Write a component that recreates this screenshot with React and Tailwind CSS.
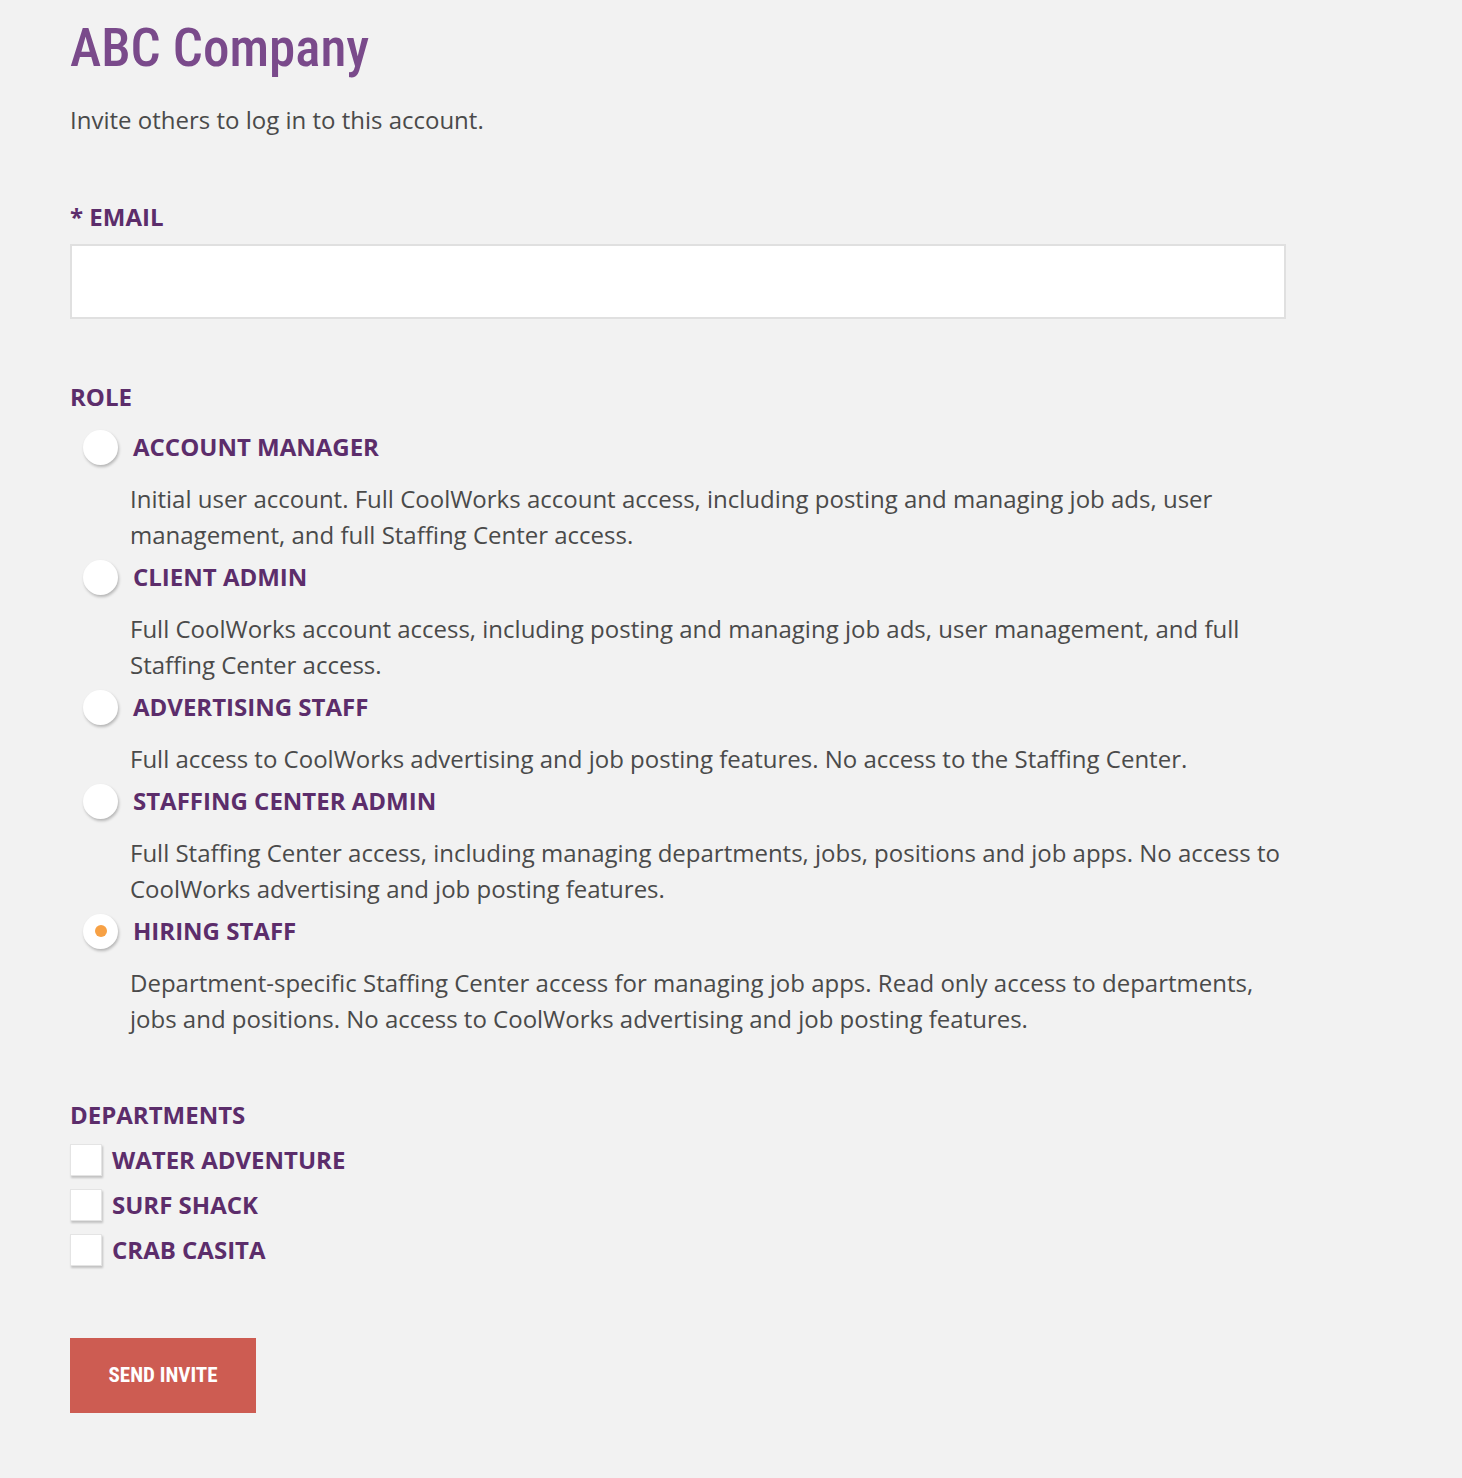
import { useState } from 'react'

const ROLES = [
  {
    id: 'account-manager',
    label: 'Account Manager',
    desc: 'Initial user account. Full CoolWorks account access, including posting and managing job ads, user management, and full Staffing Center access.',
  },
  {
    id: 'client-admin',
    label: 'Client Admin',
    desc: 'Full CoolWorks account access, including posting and managing job ads, user management, and full Staffing Center access.',
  },
  {
    id: 'advertising-staff',
    label: 'Advertising Staff',
    desc: 'Full access to CoolWorks advertising and job posting features. No access to the Staffing Center.',
  },
  {
    id: 'staffing-center-admin',
    label: 'Staffing Center Admin',
    desc: 'Full Staffing Center access, including managing departments, jobs, positions and job apps. No access to CoolWorks advertising and job posting features.',
  },
  {
    id: 'hiring-staff',
    label: 'Hiring Staff',
    desc: 'Department-specific Staffing Center access for managing job apps. Read only access to departments, jobs and positions. No access to CoolWorks advertising and job posting features.',
  },
]

const DEPARTMENTS = ['Water Adventure', 'Surf Shack', 'Crab Casita']

export default function App() {
  const [role, setRole] = useState('hiring-staff')
  const [depts, setDepts] = useState({})
  const [email, setEmail] = useState('')

  return (
    <div className="min-h-[1478px] bg-[#f2f2f2] font-['Open_Sans',sans-serif] text-[#4a4a4a]">
      <div className="w-[1216px] ml-[70px] pt-[18px] pb-[65px]">
        {/* Header */}
        <h1 className="font-['Liberation_Sans_Narrow','Roboto_Condensed','Roboto',sans-serif] font-medium text-[53px] leading-[60px] text-[#7a4a8b]">
          ABC Company
        </h1>
        <p className="mt-[24px] text-[24px] leading-[36px]">Invite others to log in to this account.</p>

        {/* Email */}
        <label className="block mt-[61px] text-[24px] leading-[36px] font-bold uppercase text-[#5c2d6b]">
          * Email
        </label>
        <input
          type="email"
          value={email}
          onChange={(e) => setEmail(e.target.value)}
          className="block mt-[9px] w-full h-[75px] bg-white border-2 border-[#e0e0e0] outline-none px-4 text-[22px]"
        />

        {/* Role */}
        <div className="mt-[60px] text-[24px] leading-[36px] font-bold uppercase text-[#5c2d6b]">Role</div>
        <div className="mt-[14px] flex flex-col gap-[6px]">
          {ROLES.map((r) => (
            <div key={r.id}>
              <button
                type="button"
                onClick={() => setRole(r.id)}
                className="flex items-center gap-[15px] pl-[13px] cursor-pointer"
              >
                <span className="w-[35px] h-[35px] rounded-full bg-white shadow-[1px_2px_3px_rgba(0,0,0,0.25)] flex items-center justify-center">
                  {role === r.id && <span className="w-[12px] h-[12px] rounded-full bg-[#f7a145]" />}
                </span>
                <span className="text-[24px] leading-[36px] font-bold uppercase text-[#5c2d6b]">{r.label}</span>
              </button>
              <p className="mt-[16px] pl-[60px] text-[24px] leading-[36px]">{r.desc}</p>
            </div>
          ))}
        </div>

        {/* Departments */}
        <div className="mt-[60px] text-[24px] leading-[36px] font-bold uppercase text-[#5c2d6b]">Departments</div>
        <div className="mt-[9px] flex flex-col gap-[9px]">
          {DEPARTMENTS.map((d) => (
            <button
              key={d}
              type="button"
              onClick={() => setDepts({ ...depts, [d]: !depts[d] })}
              className="flex items-center gap-[10px] cursor-pointer"
            >
              <span className="w-[32px] h-[32px] bg-white border border-[#e4e4e4] shadow-[1px_2px_2px_rgba(0,0,0,0.2)] flex items-center justify-center text-[#5c2d6b] text-[20px]">
                {depts[d] ? '✓' : ''}
              </span>
              <span className="text-[24px] leading-[36px] font-bold uppercase text-[#5c2d6b]">{d}</span>
            </button>
          ))}
        </div>

        {/* Submit */}
        <button
          type="button"
          className="mt-[70px] w-[186px] h-[75px] bg-[#cd5c52] text-white font-['Liberation_Sans_Narrow','Roboto_Condensed','Roboto',sans-serif] font-bold text-[21px] uppercase"
        >
          Send Invite
        </button>
      </div>
    </div>
  )
}
